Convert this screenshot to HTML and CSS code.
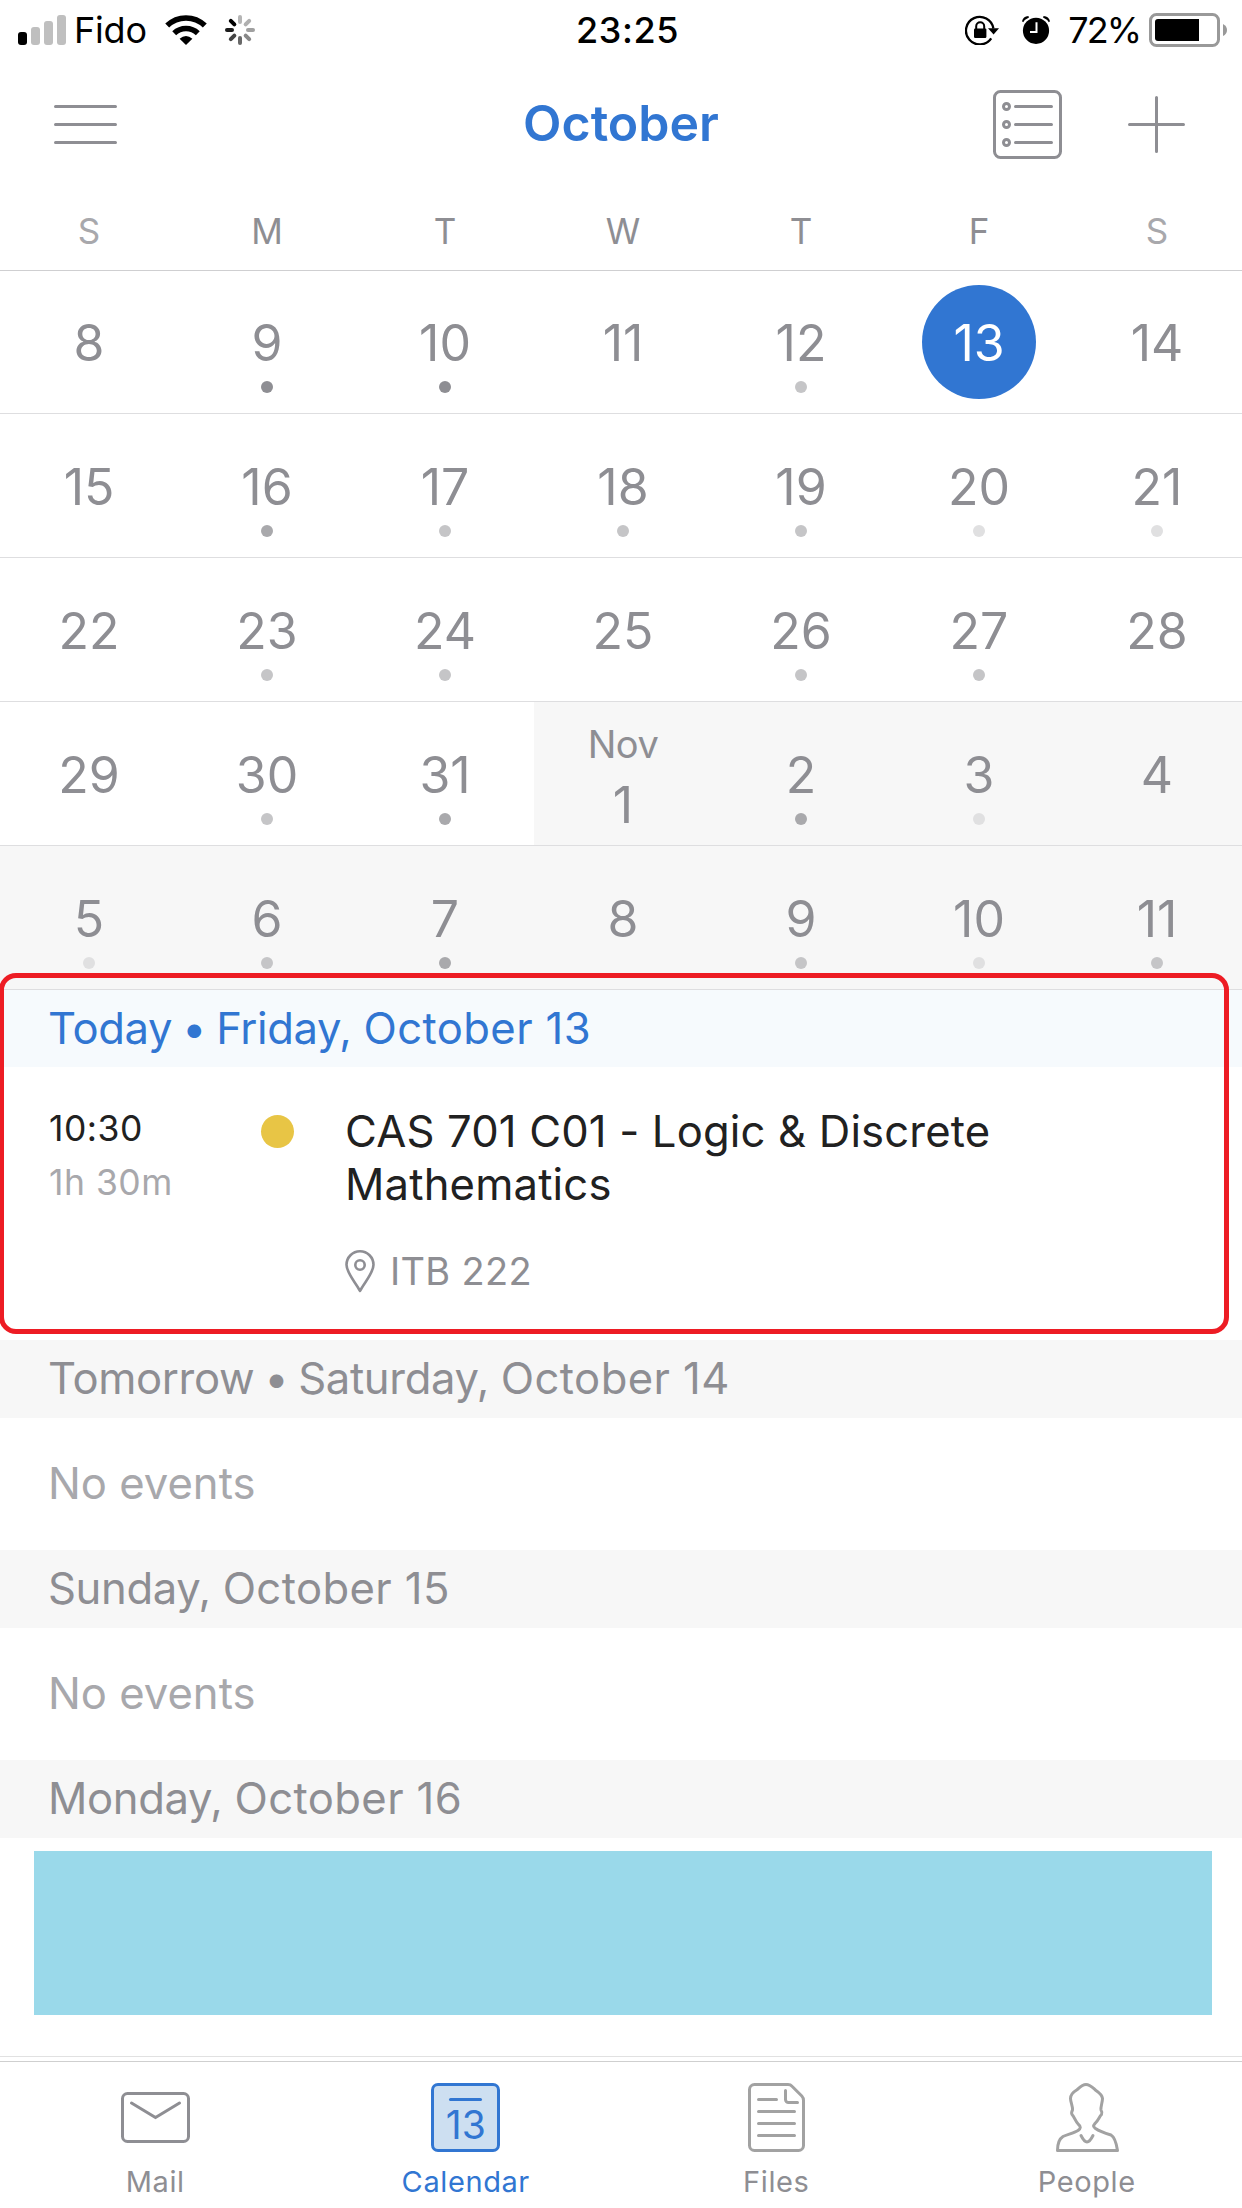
FILE: index.html
```
<!DOCTYPE html>
<html lang="en">
<head>
<meta charset="utf-8">
<title>Calendar</title>
<link rel="stylesheet" href="styles.css">
</head>
<body>
<div class="app">
  <div class="status-bar">
    <div class="status-side">
      <svg class="signal" width="48" height="30" viewBox="0 0 48 30">
        <rect x="0" y="17" width="9" height="13" rx="3" fill="#000"/>
        <rect x="13" y="12" width="9" height="18" rx="3" fill="#bfbfbf"/>
        <rect x="26" y="6" width="9" height="24" rx="3" fill="#bfbfbf"/>
        <rect x="39" y="0" width="9" height="30" rx="3" fill="#bfbfbf"/>
      </svg>
      <span class="carrier">Fido</span>
      <svg class="wifi" width="42" height="30" viewBox="0 0 42 30">
        <path d="M2.2 10.6A27 27 0 0 1 39.8 10.6" fill="none" stroke="#000" stroke-width="5.6"/>
        <path d="M9.2 18.2A17 17 0 0 1 32.8 18.2" fill="none" stroke="#000" stroke-width="5.6"/>
        <path d="M14.6 23.8Q21 18.2 27.4 23.8L21 30Z" fill="#000"/>
      </svg>
      <svg class="spinner" width="30" height="30" viewBox="-15 -15 30 30" stroke-width="4" stroke-linecap="round">
        <path d="M0-13V-8" stroke="#b5b5b5"/>
        <path d="M0-13V-8" stroke="#b0b0b0" transform="rotate(45)"/>
        <path d="M0-13V-8" stroke="#a0a0a0" transform="rotate(90)"/>
        <path d="M0-13V-8" stroke="#888" transform="rotate(135)"/>
        <path d="M0-13V-8" stroke="#686868" transform="rotate(180)"/>
        <path d="M0-13V-8" stroke="#444" transform="rotate(225)"/>
        <path d="M0-13V-8" stroke="#1c1c1c" transform="rotate(270)"/>
        <path d="M0-13V-8" stroke="#000" transform="rotate(315)"/>
      </svg>
    </div>
    <span class="clock">23:25</span>
    <div class="status-side status-right">
      <svg class="lock" width="34" height="30" viewBox="0 0 34 30">
        <path d="M26.2 23.4A13.8 13.8 0 1 1 28.4 13.5" fill="none" stroke="#000" stroke-width="2.3"/>
        <path d="M23 13.3H34L28.6 19.6Z" fill="#000"/>
        <rect x="9" y="13.6" width="12.4" height="9.4" rx="1.2" fill="#000"/>
        <path d="M11.2 14V11.2a4 4 0 0 1 8 0V14" fill="none" stroke="#000" stroke-width="2"/>
      </svg>
      <svg class="alarm" width="28" height="28" viewBox="0 0 28 28">
        <circle cx="14" cy="14.8" r="13.1" fill="#000"/>
        <path d="M0 5.2Q1 .6 6.4 0L7 1.4Q3.2 3 1.2 6.2Z" fill="#000"/>
        <path d="M28 5.2Q27 .6 21.6 0L21 1.4Q24.8 3 26.8 6.2Z" fill="#000"/>
        <path d="M14.5 6.2V16H8" fill="none" stroke="#fff" stroke-width="2"/>
      </svg>
      <span class="percent">72%</span>
      <svg class="battery" width="78" height="34" viewBox="0 0 78 34">
        <rect x="1.5" y="1.5" width="68" height="31" rx="6" fill="none" stroke="#999" stroke-width="3"/>
        <path d="M9 6H50V28H9a3 3 0 0 1-3-3V9a3 3 0 0 1 3-3Z" fill="#000"/>
        <path d="M74 11Q78 13 78 17T74 23Z" fill="#999"/>
      </svg>
    </div>
  </div>

  <div class="title-bar">
    <svg class="menu" width="63" height="39" viewBox="0 0 63 39" stroke="#8e8e93" stroke-width="3" stroke-linecap="round">
      <path d="M1.5 1.5H61.5M1.5 19.5H61.5M1.5 37.5H61.5"/>
    </svg>
    <h1 class="title">October</h1>
    <div class="actions">
      <svg width="69" height="69" viewBox="0 0 69 69" fill="none" stroke="#8e8e93" stroke-width="3" stroke-linecap="round">
        <rect x="1.5" y="1.5" width="66" height="66" rx="6"/>
        <circle cx="13.5" cy="16.5" r="3"/><circle cx="13.5" cy="34.5" r="3"/><circle cx="13.5" cy="52.5" r="3"/>
        <path d="M22.5 16.5H58.5M22.5 34.5H58.5M22.5 52.5H58.5"/>
      </svg>
      <svg width="57" height="57" viewBox="0 0 57 57" stroke="#8e8e93" stroke-width="3" stroke-linecap="round">
        <path d="M28.5 1.5V55.5M1.5 28.5H55.5"/>
      </svg>
    </div>
  </div>

  <div class="weekdays">
    <span class="weekend">S</span><span>M</span><span>T</span><span>W</span><span>T</span><span>F</span><span class="weekend">S</span>
  </div>

  <div class="month">
    <div class="week first">
      <div class="day"><b>8</b><i></i></div>
      <div class="day"><b>9</b><i class="busy4"></i></div>
      <div class="day"><b>10</b><i class="busy4"></i></div>
      <div class="day"><b>11</b><i></i></div>
      <div class="day"><b>12</b><i class="busy2"></i></div>
      <div class="day selected"><b>13</b><i></i></div>
      <div class="day"><b>14</b><i></i></div>
    </div>
    <div class="week">
      <div class="day"><b>15</b><i></i></div>
      <div class="day"><b>16</b><i class="busy3"></i></div>
      <div class="day"><b>17</b><i class="busy2"></i></div>
      <div class="day"><b>18</b><i class="busy2"></i></div>
      <div class="day"><b>19</b><i class="busy2"></i></div>
      <div class="day"><b>20</b><i class="busy1"></i></div>
      <div class="day"><b>21</b><i class="busy1"></i></div>
    </div>
    <div class="week">
      <div class="day"><b>22</b><i></i></div>
      <div class="day"><b>23</b><i class="busy2"></i></div>
      <div class="day"><b>24</b><i class="busy2"></i></div>
      <div class="day"><b>25</b><i></i></div>
      <div class="day"><b>26</b><i class="busy2"></i></div>
      <div class="day"><b>27</b><i class="busy2"></i></div>
      <div class="day"><b>28</b><i></i></div>
    </div>
    <div class="week">
      <div class="day"><b>29</b><i></i></div>
      <div class="day"><b>30</b><i class="busy2"></i></div>
      <div class="day"><b>31</b><i class="busy3"></i></div>
      <div class="day next month-start"><em>Nov</em><b>1</b></div>
      <div class="day next"><b>2</b><i class="busy3"></i></div>
      <div class="day next"><b>3</b><i class="busy1"></i></div>
      <div class="day next"><b>4</b><i></i></div>
    </div>
    <div class="week">
      <div class="day next"><b>5</b><i class="busy1"></i></div>
      <div class="day next"><b>6</b><i class="busy2"></i></div>
      <div class="day next"><b>7</b><i class="busy3"></i></div>
      <div class="day next"><b>8</b><i></i></div>
      <div class="day next"><b>9</b><i class="busy2"></i></div>
      <div class="day next"><b>10</b><i class="busy1"></i></div>
      <div class="day next"><b>11</b><i class="busy2"></i></div>
    </div>
  </div>

  <div class="agenda">
    <div class="highlight"></div>
    <h2 class="date today"><span class="dayname">Today <span class="bullet">•</span> Friday, </span>October 13</h2>
    <div class="event">
      <div class="when"><div class="start">10:30</div><div class="length">1h 30m</div></div>
      <div class="marker"></div>
      <div class="what">
        <div class="name">CAS 701 C01 - Logic &amp; Discrete<br>Mathematics</div>
        <div class="place">
          <svg width="30" height="43" viewBox="0 0 30 43" fill="none" stroke="#8e8e93" stroke-width="2.6">
            <path d="M15 41C11 33 1.5 23 1.5 14.8a13.5 13.5 0 0 1 27 0C28.5 23 19 33 15 41Z" stroke-linejoin="round"/>
            <circle cx="15" cy="15" r="4.7"/>
          </svg>
          <span>ITB 222</span>
        </div>
      </div>
    </div>
    <h2 class="date"><span class="dayname">Tomorrow <span class="bullet">•</span> Saturday, </span>October 14</h2>
    <div class="empty">No events</div>
    <h2 class="date"><span class="dayname">Sunday, </span>October 15</h2>
    <div class="empty">No events</div>
    <h2 class="date"><span class="dayname">Monday, </span>October 16</h2>
    <div class="block"></div>
  </div>

  <div class="tabs">
    <div class="tab">
      <svg width="69" height="69" viewBox="0 0 69 69" fill="none" stroke="#8e8e93" stroke-width="3">
        <rect x="1.5" y="10.5" width="66" height="48" rx="5"/>
        <path d="M10.5 20L34.5 34.5L58.5 20" stroke-linecap="round"/>
      </svg>
      <span>Mail</span>
    </div>
    <div class="tab active">
      <div class="calendar-icon"><hr><span>13</span></div>
      <span>Calendar</span>
    </div>
    <div class="tab">
      <svg width="57" height="69" viewBox="0 0 57 69" fill="none" stroke="#a2a2a2" stroke-width="3" stroke-linecap="round" stroke-linejoin="round">
        <path d="M6.500 1.500H40Q42.500 1.500 44 3.200L53.800 13Q55.500 14.800 55.500 17.500V62.500a5 5 0 0 1-5 5H6.500a5 5 0 0 1-5-5V6.500a5 5 0 0 1 5-5Z"/>
        <path d="M37.500 7.500V16.500a3 3 0 0 0 3 3H49.500M10.500 16.500H28.500M10.500 28.500H46.500M10.500 40.500H46.500M10.500 52.500H46.500"/>
      </svg>
      <span>Files</span>
    </div>
    <div class="tab">
      <svg class="person" width="63" height="69" viewBox="0 0 63 69" fill="none" stroke="#a2a2a2" stroke-width="3" stroke-linecap="round" stroke-linejoin="round">
        <path d="M30 1.500C26 1.500 23.500 4.500 21 6.800C16.500 9.500 14.500 12 14.500 15.500C14.500 19 17 24 16.500 27C15.500 29 15 30 16 31.500C18.500 34 19 38 22.500 41.500C25 43.500 25 45 22 47.500C18 50 11 51.500 7 53.500C3 56 1.500 61 1.500 67.500H61.500C60.500 61 58.500 54 55 52C50 50.500 43 48 39.500 45.500C37 43.500 37 43 39 40.500C43 36.500 43 34 45.500 31.500C46.500 29.500 46.300 29 45 27C44.500 24 46.500 19 46.500 15.500C46 11.500 43 9.500 40 7.500C36.500 4.500 34 1.500 30 1.500Z"/>
        <path d="M25 52.500C27 56.500 28.500 59 31 59S35 56.500 37 52.500"/>
      </svg>
      <span>People</span>
    </div>
  </div>
</div>
</body>
</html>
```
FILE: styles.css
```
* { box-sizing: border-box; }
body { margin: 0; background: #fff; }
svg { display: block; flex: none; }

.app {
  display: flex;
  flex-direction: column;
  width: 1242px;
  height: 2208px;
  overflow: hidden;
  background: #fff;
  color: #8e8e93;
  font-family: "Inter", "Liberation Sans", sans-serif;
}

/* Status bar */
.status-bar {
  display: grid;
  grid-template-columns: 1fr auto 1fr;
  align-items: center;
  height: 60px;
  padding: 0 15px 0 18px;
  color: #000;
  font-size: 36px;
  line-height: 60px;
}
.status-side { display: flex; align-items: center; }
.status-right { justify-content: flex-end; }
.carrier { margin-left: 8px; letter-spacing: -.2px; }
.wifi { margin-left: 18px; }
.spinner { margin-left: 18px; }
.clock { padding-left: 10px; font-weight: 500; letter-spacing: .6px; }
.alarm { margin-left: 23px; }
.percent { margin-left: 18px; letter-spacing: -2px; }
.battery { margin-left: 9px; }

/* Title bar */
.title-bar {
  display: grid;
  grid-template-columns: 1fr auto 1fr;
  align-items: center;
  height: 129px;
  padding: 0 57px 0 54px;
}
.title {
  margin: 0;
  padding: 0 0 3px 3px;
  color: #3176d2;
  font-size: 50px;
  font-weight: 600;
  line-height: 60px;
}
.actions { display: flex; align-items: center; justify-content: flex-end; gap: 66px; }

/* Month grid */
.weekdays {
  display: grid;
  grid-template-columns: repeat(7, 178px);
  height: 82px;
  border-bottom: 1px solid #cfcfd1;
  font-size: 35px;
  line-height: 84px;
  text-align: center;
}
.weekend { color: #a8a8ac; }

.week {
  display: grid;
  grid-template-columns: repeat(7, 178px);
  height: 144px;
  border-bottom: 1px solid #dedee0;
}
.week.first { height: 143px; }
.day {
  position: relative;
  display: flex;
  flex-direction: column;
  align-items: center;
  justify-content: flex-end;
  gap: 8px;
  padding-bottom: 20px;
}
.day b {
  position: relative;
  font-size: 50px;
  font-weight: 400;
  line-height: 60px;
}
.day i { width: 12px; height: 12px; border-radius: 50%; }
.day .busy4 { background: #8e8e93; }
.day .busy3 { background: #a9a9ac; }
.day .busy2 { background: #c5c5c7; }
.day .busy1 { background: #e0e0e1; }
.next { background: #f7f7f7; }
.selected b { color: #fff; }
.selected::before {
  content: "";
  position: absolute;
  left: 32px;
  top: 14px;
  width: 114px;
  height: 114px;
  border-radius: 50%;
  background: #3176d2;
}
.month-start { gap: 6px; padding-bottom: 10px; }
.month-start em { font-size: 38px; font-style: normal; line-height: 50px; letter-spacing: -.5px; }

/* Agenda */
.agenda { position: relative; flex: 1; }
.highlight {
  position: absolute;
  left: -1px;
  top: -17px;
  width: 1230px;
  height: 361px;
  border: 5px solid #ed1c24;
  border-radius: 17px;
}
.date {
  margin: 0;
  height: 78px;
  padding-left: 48px;
  background: #f7f7f7;
  font-size: 43.6px;
  font-weight: 400;
  line-height: 78px;
  letter-spacing: .4px;
}
.date.today { height: 77px; line-height: 77px; background: #f6fafd; color: #3176d2; }
.dayname { letter-spacing: -.35px; }
.bullet { margin: 0 -2px; }
.event {
  display: flex;
  height: 273px;
  padding: 36px 0 0 49px;
}
.when { width: 212px; margin-top: -1px; font-size: 35.5px; line-height: 54px; letter-spacing: .5px; }
.start { color: #212121; }
.length { color: #a8a8ac; }
.marker {
  flex: none;
  width: 33px;
  height: 33px;
  margin: 12px 51px 0 0;
  border-radius: 50%;
  background: #e8c545;
}
.name {
  margin-top: 2px;
  color: #212121;
  font-size: 43.6px;
  line-height: 53px;
  letter-spacing: .17px;
}
.place {
  display: flex;
  align-items: center;
  gap: 15px;
  margin-top: 39px;
  font-size: 38px;
  line-height: 43px;
  letter-spacing: .3px;
}
.empty {
  height: 132px;
  padding-left: 48px;
  color: #a8a8ac;
  font-size: 43.6px;
  line-height: 132px;
}
.block { width: 1178px; height: 164px; margin: 13px 0 0 34px; background: #9ad9ea; }

/* Tab bar */
.tabs {
  display: grid;
  grid-template-columns: repeat(4, 1fr);
  height: 152px;
  border-top: 1px solid #e1e1e1;
  font-size: 29px;
  letter-spacing: .6px;
}
.tabs::before {
  content: "";
  grid-column: 1 / -1;
  height: 4px;
  border-bottom: 1px solid #cfcfcf;
}
.tab {
  display: flex;
  flex-direction: column;
  align-items: center;
  gap: 10px;
  height: 147px;
  padding-top: 21px;
  line-height: 40px;
}
.active { color: #3176d2; }
.person { margin-left: 2px; }
.calendar-icon {
  display: flex;
  flex-direction: column;
  align-items: center;
  width: 69px;
  height: 69px;
  border: 3px solid #3176d2;
  border-radius: 7px;
  background: #cddff1;
  font-size: 39px;
  line-height: 40px;
  letter-spacing: 0;
}
.calendar-icon hr {
  width: 33px;
  height: 3px;
  margin: 12px 0 4px;
  border: 0;
  border-radius: 2px;
  background: #3176d2;
}
```
